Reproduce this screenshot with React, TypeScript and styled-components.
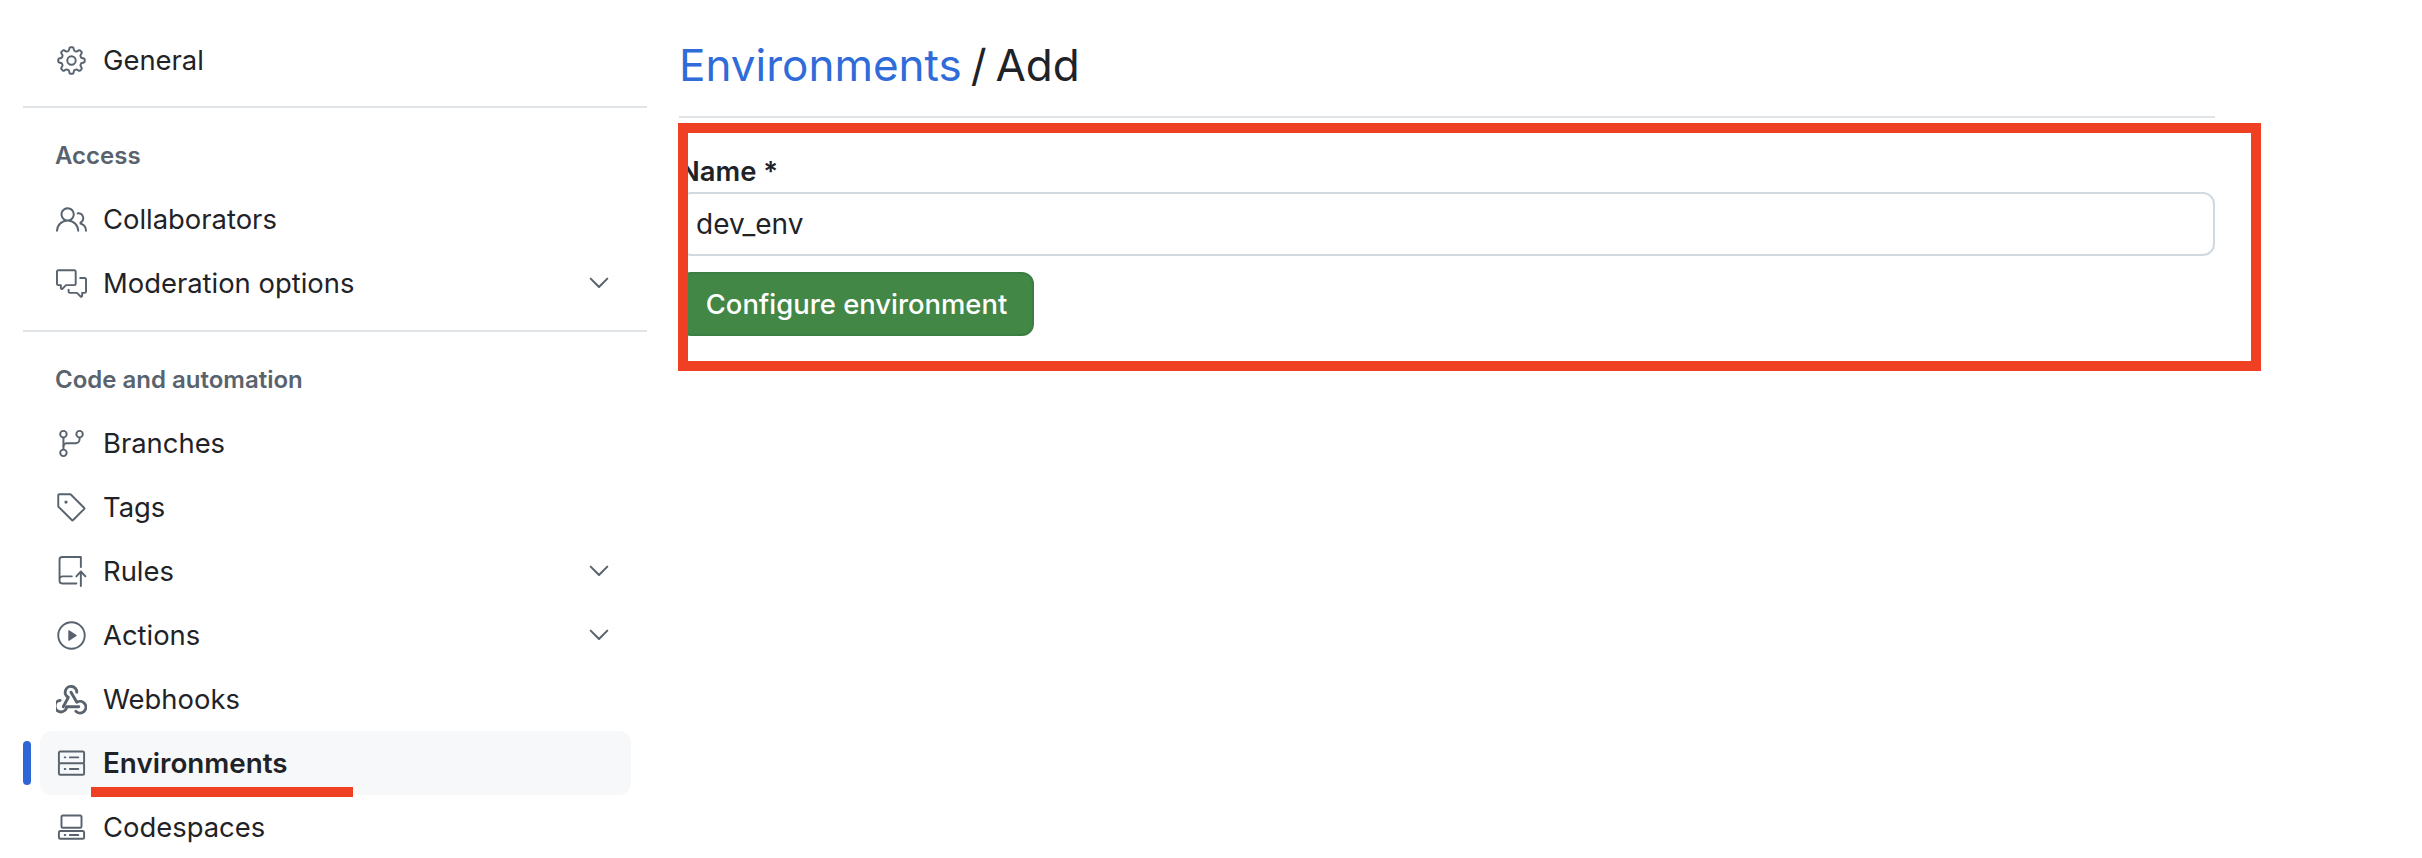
import React from "react";
import styled, { createGlobalStyle } from "styled-components";
import {
  GoGear, GoPeople, GoCommentDiscussion, GoChevronDown, GoGitBranch, GoTag,
  GoRepoPush, GoPlay, GoServer, GoCodespaces,
} from "react-icons/go";

const Global = createGlobalStyle`
  html, body { margin: 0; padding: 0; background: #fff; height: 100%; overflow: hidden; }
  body { font-family: Inter, "Liberation Sans", sans-serif; color: #1f2328; }
`;

const Page = styled.div`
  position: relative;
  display: flex;
  align-items: flex-start;
  width: 2422px;
  height: 858px;
  overflow: hidden;
  padding-left: 23px;
  box-sizing: border-box;
`;

const Sidebar = styled.nav`
  flex: 0 0 624px;
  padding-top: 28px;
  display: flex;
  flex-direction: column;
`;

const Divider = styled.div<{ $gap: number }>`
  height: 2px;
  background: #dfe4e8;
  margin-top: ${(p) => p.$gap}px;
`;

const SectionTitle = styled.div`
  height: 63px;
  margin-top: 16px;
  padding-left: 32px;
  display: flex;
  align-items: center;
  font-size: 24px;
  font-weight: 600;
  color: #59636e;
`;

const Row = styled.div<{ $active?: boolean }>`
  position: relative;
  height: 64px;
  width: 591px;
  margin-left: 17px;
  padding: 0 16px 0 16px;
  box-sizing: border-box;
  display: flex;
  align-items: center;
  gap: 16px;
  border-radius: 12px;
  font-size: ${(p) => (p.$active ? 27.8 : 27.4)}px;
  font-weight: ${(p) => (p.$active ? 600 : 400)};
  background: ${(p) => (p.$active ? "#f6f8fa" : "transparent")};
  color: #1f2328;
`;

const ActiveBar = styled.span`
  position: absolute;
  left: -17px;
  top: 10px;
  width: 8px;
  height: 44px;
  border-radius: 4px;
  background: #2f66d6;
`;

const IconSlot = styled.span`
  display: flex;
  flex: 0 0 31px;
  color: #59636e;
`;

const RowLabel = styled.span`
  flex: 1;
`;

const Chevron = styled.span`
  display: flex;
  color: #59636e;
`;

const Main = styled.main`
  flex: 0 0 1536px;
  margin-left: 32px;
  display: flex;
  flex-direction: column;
`;

const Heading = styled.h1`
  margin: 0;
  padding: 37px 0 0;
  height: 118px;
  box-sizing: border-box;
  border-bottom: 2px solid #dfe4e8;
  font-size: 44px;
  font-weight: 400;
  line-height: 56px;
  word-spacing: -3.5px;
  color: #1f2328;
`;

const HeadingLink = styled.a`
  color: #2f6bd9;
  text-decoration: none;
`;

const Label = styled.label`
  display: block;
  margin-top: 37px;
  font-size: 27.4px;
  font-weight: 600;
  line-height: 32px;
`;

const TextInput = styled.input`
  display: block;
  width: 100%;
  height: 64px;
  margin-top: 5px;
  padding: 0 15px;
  box-sizing: border-box;
  border: 2px solid #d1d9e0;
  border-radius: 12px;
  font: 400 28px Inter, "Liberation Sans", sans-serif;
  color: #1f2328;
  outline: none;
`;

const SubmitButton = styled.button`
  display: block;
  width: 355px;
  height: 64px;
  margin-top: 16px;
  padding: 0;
  box-sizing: border-box;
  border: 2px solid #3c7d41;
  border-radius: 12px;
  background: #438746;
  color: #fff;
  font: 500 27.4px Inter, "Liberation Sans", sans-serif;
`;

const HighlightBox = styled.div`
  position: absolute;
  left: 678px;
  top: 123px;
  width: 1583px;
  height: 248px;
  box-sizing: border-box;
  border: 10px solid #ef4023;
  pointer-events: none;
`;

const HighlightLine = styled.div`
  position: absolute;
  left: 91px;
  top: 787px;
  width: 262px;
  height: 10px;
  background: #ef4023;
`;

const WebhookIcon = ({ size = 31 }: { size?: number }) => (
  <svg width={size} height={size} viewBox="0 0 16 16" fill="none" stroke="currentColor" strokeWidth="1.5" strokeLinecap="round" strokeLinejoin="round">
    <path d="M10.75 4.25a3 3 0 1 0-4.4 2.65L3.75 11.75" />
    <path d="M7.75 4.25l3 5.2a3 3 0 1 1-.5 4.6" />
    <path d="M2.1 8.45a3 3 0 1 0 3.4 3.3h6.25" />
  </svg>
);

type Item = { icon: React.ElementType; label: string; chevron?: boolean; active?: boolean };

const NavRow = ({ icon: Icon, label, chevron, active }: Item) => (
  <Row $active={active}>
    {active && <ActiveBar />}
    <IconSlot><Icon size={31} /></IconSlot>
    <RowLabel>{label}</RowLabel>
    {chevron && <Chevron><GoChevronDown size={32} /></Chevron>}
  </Row>
);

const access: Item[] = [
  { icon: GoPeople, label: "Collaborators" },
  { icon: GoCommentDiscussion, label: "Moderation options", chevron: true },
];

const code: Item[] = [
  { icon: GoGitBranch, label: "Branches" },
  { icon: GoTag, label: "Tags" },
  { icon: GoRepoPush, label: "Rules", chevron: true },
  { icon: GoPlay, label: "Actions", chevron: true },
  { icon: WebhookIcon, label: "Webhooks" },
  { icon: GoServer, label: "Environments", active: true },
  { icon: GoCodespaces, label: "Codespaces" },
];

export default function App() {
  return (
    <Page>
      <Global />
      <Sidebar>
        <NavRow icon={GoGear} label="General" />
        <Divider $gap={14} />
        <SectionTitle>Access</SectionTitle>
        {access.map((i) => <NavRow key={i.label} {...i} />)}
        <Divider $gap={15} />
        <SectionTitle>Code and automation</SectionTitle>
        {code.map((i) => <NavRow key={i.label} {...i} />)}
      </Sidebar>
      <Main>
        <Heading><HeadingLink href="#">Environments</HeadingLink> / Add</Heading>
        <Label htmlFor="env">Name *</Label>
        <TextInput id="env" defaultValue="dev_env" />
        <SubmitButton>Configure environment</SubmitButton>
      </Main>
      <HighlightBox />
      <HighlightLine />
    </Page>
  );
}
